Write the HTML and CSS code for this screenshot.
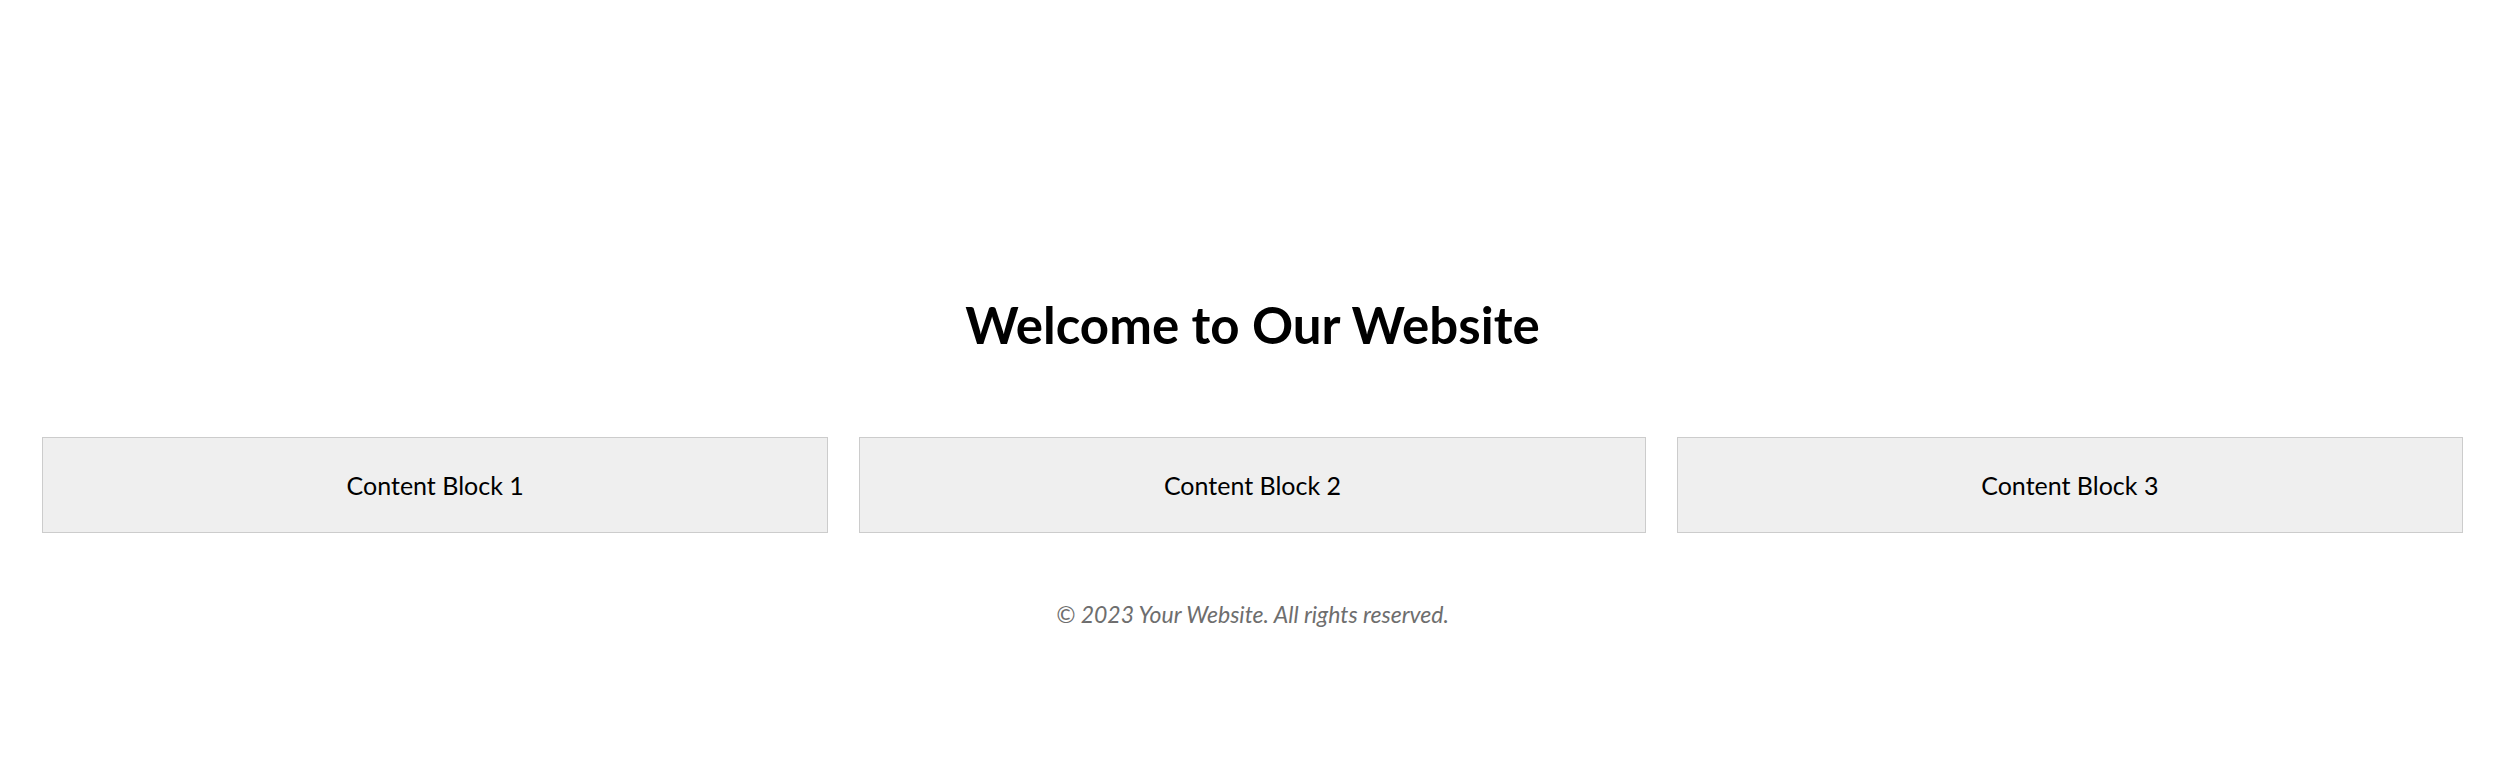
FILE: index.html
```html
<!DOCTYPE html>
<html lang="en">
<head>
<meta charset="utf-8">
<title>Welcome</title>
<link rel="stylesheet" href="styles.css">
</head>
<body>
<main class="page">
  <h1 class="title">Welcome to Our Website</h1>
  <section class="blocks">
    <div class="block">Content Block 1</div>
    <div class="block">Content Block 2</div>
    <div class="block">Content Block 3</div>
  </section>
  <footer class="footer">© 2023 Your Website. All rights reserved.</footer>
</main>
</body>
</html>
```
FILE: styles.css
```css
html, body {
  margin: 0;
  padding: 0;
  background: #ffffff;
}
body {
  font-family: Lato, "Open Sans", sans-serif;
  color: #000;
}
.page {
  padding: 294px 37px 0 42px;
  display: flex;
  flex-direction: column;
}
.title {
  margin: 0;
  font-size: 51px;
  line-height: 62px;
  font-weight: 700;
  text-align: center;
}
.blocks {
  margin-top: 81px;
  display: flex;
  gap: 31px;
}
.block {
  flex: 1;
  height: 94px;
  background: #efefef;
  border: 1px solid #cccccc;
  display: flex;
  align-items: center;
  justify-content: center;
  font-size: 25px;
}
.footer {
  margin-top: 67px;
  text-align: center;
  font-style: italic;
  font-size: 23px;
  color: #6e6e6e;
}
```
